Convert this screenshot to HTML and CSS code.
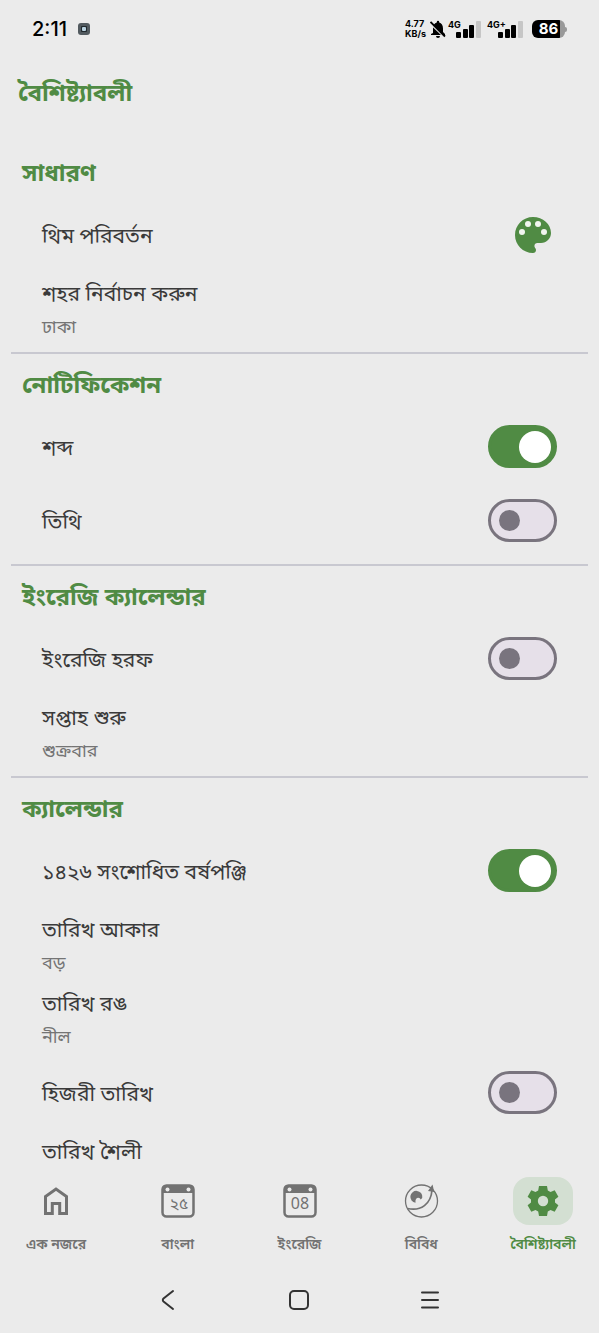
FILE: index.html
```html
<!DOCTYPE html>
<html lang="bn">
<head>
<meta charset="utf-8">
<meta name="viewport" content="width=device-width, initial-scale=1">
<title>বৈশিষ্ট্যাবলী</title>
<link rel="stylesheet" href="styles.css">
</head>
<body>
<div class="screen">
  <div class="status">
    <span class="clock">2:11</span>
    <svg class="chip" viewBox="0 0 14 14"><rect x="1" y="1" width="12" height="12" rx="3" fill="#525a5f"/><rect x="4" y="4" width="6" height="6" rx="1" fill="#20282d"/><rect x="5" y="5" width="4" height="4" rx="1" fill="#b9d2e0"/></svg>
    <span class="speed"><span>4.77</span><span>KB/s</span></span>
    <svg class="mute" viewBox="0 0 16 18"><path d="M3 13V8.500C3 5.500 4.500 3 6.800 2.500V2a1.200 1.200 0 0 1 2.400 0v.5C11.500 3 13 5.500 13 8.500V12l2 2v1h-14v-1zM6 16h4a2 2 0 0 1-4 0z"/><path d="M.5 3.500l14.500 14" stroke="#ebebeb" stroke-width="2"/><path d="M.5 2l14.500 14.500" stroke="#000" stroke-width="1.800"/></svg>
    <span class="signal"><span class="net">4G</span><svg class="bars" viewBox="0 0 26 17"><rect x="1" y="11" width="5" height="6" rx="1"/><rect x="8" y="8" width="5" height="9" rx="1"/><rect x="14" y="4" width="5" height="13" rx="1"/><rect class="off" x="21" y="0" width="5" height="17" rx="1"/></svg></span>
    <span class="signal second"><span class="net">4G+</span><svg class="bars" viewBox="0 0 26 17"><rect x="1" y="11" width="5" height="6" rx="1"/><rect x="8" y="8" width="5" height="9" rx="1"/><rect x="14" y="4" width="5" height="13" rx="1"/><rect class="off" x="21" y="0" width="5" height="17" rx="1"/></svg></span>
    <span class="battery">86</span><span class="tip"></span>
  </div>

  <header class="bar"><h1>বৈশিষ্ট্যাবলী</h1></header>

  <main class="settings">
    <section class="group">
      <h2>সাধারণ</h2>
      <button class="row" type="button"><span class="label">থিম পরিবর্তন</span>
        <svg class="palette" viewBox="0 0 36 36"><path d="M18 0C8 0 0 8 0 18s8 18 18 18c1.700 0 3-1.300 3-3 0-.8-.3-1.500-.8-2-.5-.6-.8-1.200-.8-2 0-1.700 1.300-3 3-3H26c5.500 0 10-4.500 10-10C36 7.200 28 0 18 0z" fill="#508b44"/><g fill="#f1f5ef"><circle cx="7" cy="15" r="3"/><circle cx="13" cy="7" r="3"/><circle cx="23" cy="7" r="3"/><circle cx="29" cy="15" r="3"/></g></svg>
      </button>
      <button class="row stacked" type="button"><span class="label">শহর নির্বাচন করুন</span><span class="value">ঢাকা</span></button>
    </section>
    <section class="group">
      <h2>নোটিফিকেশন</h2>
      <label class="row"><span class="label">শব্দ</span><input class="switch" type="checkbox" role="switch" checked></label>
      <label class="row"><span class="label">তিথি</span><input class="switch" type="checkbox" role="switch"></label>
    </section>
    <section class="group">
      <h2>ইংরেজি ক্যালেন্ডার</h2>
      <label class="row"><span class="label">ইংরেজি হরফ</span><input class="switch" type="checkbox" role="switch"></label>
      <button class="row stacked" type="button"><span class="label">সপ্তাহ শুরু</span><span class="value">শুক্রবার</span></button>
    </section>
    <section class="group">
      <h2>ক্যালেন্ডার</h2>
      <label class="row"><span class="label">১৪২৬ সংশোধিত বর্ষপঞ্জি</span><input class="switch" type="checkbox" role="switch" checked></label>
      <button class="row stacked" type="button"><span class="label">তারিখ আকার</span><span class="value">বড়</span></button>
      <button class="row stacked" type="button"><span class="label">তারিখ রঙ</span><span class="value">নীল</span></button>
      <label class="row"><span class="label">হিজরী তারিখ</span><input class="switch" type="checkbox" role="switch"></label>
      <button class="row stacked" type="button"><span class="label">তারিখ শৈলী</span></button>
    </section>
  </main>

  <nav class="tabs">
    <a class="tab" href="#home"><span class="pill"><svg viewBox="0 0 36 36"><path d="M7.500 30.500V13.500L18 6l10.500 7.500v17h-6.800V20.500h-7.400v10z" fill="none" stroke="#727272" stroke-width="3"/></svg></span><span>এক নজরে</span></a>
    <a class="tab" href="#bangla"><span class="pill"><svg viewBox="0 0 36 36"><rect x="2.500" y="2.500" width="31" height="31" rx="4" fill="none" stroke="#727272" stroke-width="2.500"/><path d="M2 10V6a4 4 0 0 1 4-4h24a4 4 0 0 1 4 4v4z" fill="#727272"/><circle cx="7.500" cy="6.500" r="2" fill="#ebebeb"/><circle cx="28.500" cy="6.500" r="2" fill="#ebebeb"/><text class="day" x="19" y="26">২৫</text></svg></span><span>বাংলা</span></a>
    <a class="tab" href="#english"><span class="pill"><svg viewBox="0 0 36 36"><rect x="2.500" y="2.500" width="31" height="31" rx="4" fill="none" stroke="#727272" stroke-width="2.500"/><path d="M2 10V6a4 4 0 0 1 4-4h24a4 4 0 0 1 4 4v4z" fill="#727272"/><circle cx="7.500" cy="6.500" r="2" fill="#ebebeb"/><circle cx="28.500" cy="6.500" r="2" fill="#ebebeb"/><text class="day" x="18" y="26">08</text></svg></span><span>ইংরেজি</span></a>
    <a class="tab" href="#misc"><span class="pill"><svg viewBox="0 0 36 36"><circle cx="18.500" cy="18" r="16" fill="none" stroke="#727272" stroke-width="1.300"/><path d="M4.500 25.500C18 28.500 28 21 29 7" fill="none" stroke="#727272" stroke-width="1.700"/><path d="M25 8L29.500 1.500l1.800 7.500z" fill="#727272"/><path d="M19.300 14.500a6 6 0 1 0-6.800 5.300c-.4-3.200 1-5 2.800-5 1.200 0 2 .8 2.200 1.800.8-.5 1.500-1.200 1.800-2.100z" fill="#727272"/></svg></span><span>বিবিধ</span></a>
    <a class="tab active" href="#features" aria-current="page"><span class="pill"><svg viewBox="0 0 36 36"><path d="M14 3h8l.8 4.400 2.700 1.500 4.200-1.600 3.700 6.400-3.400 2.800v3l3.400 2.800-3.700 6.400-4.200-1.600-2.700 1.500L22 33h-8l-.8-4.400-2.700-1.500-4.200 1.600-3.700-6.400L6 19.500v-3l-3.400-2.800 3.700-6.400 4.200 1.600 2.700-1.500z" fill="#508b44"/><circle cx="18" cy="18" r="5.200" fill="#d3dfd2"/></svg></span><span>বৈশিষ্ট্যাবলী</span></a>
  </nav>

  <div class="system">
    <button type="button" aria-label="Back"><svg viewBox="0 0 24 24"><path d="M17 3L7.500 10.500a2 2 0 0 0 0 3L17 21"/></svg></button>
    <button type="button" aria-label="Home"><svg viewBox="0 0 24 24"><rect x="3" y="3" width="18" height="18" rx="4"/></svg></button>
    <button type="button" aria-label="Recents"><svg viewBox="0 0 24 24"><path d="M4 4.500h16M4 12h16M4 19.500h16"/></svg></button>
  </div>
</div>
</body>
</html>
```

FILE: styles.css
```css
* { box-sizing: border-box; }

body {
  margin: 0;
  background: #ebebeb;
  color: #3a3a3a;
  font-family: "Noto Sans", "Noto Sans Bengali", sans-serif;
}

button, input { margin: 0; font: inherit; color: inherit; }
button { border: 0; background: none; text-align: left; }

.screen {
  display: flex;
  flex-direction: column;
  height: 100vh;
}

.status {
  flex: none;
  display: flex;
  align-items: center;
  height: 58px;
  padding: 0 32px;
  color: #000;
  font-family: Inter, "Noto Sans", sans-serif;
}
.clock { font-size: 20px; line-height: 28px; font-weight: 500; }
.chip { width: 14px; height: 14px; margin-left: 10px; }
.speed {
  display: flex;
  flex-direction: column;
  margin-left: auto;
  font-size: 9px;
  line-height: 10px;
  font-weight: 700;
}
.mute { width: 16px; height: 18px; margin: 0 2px 0 4px; }
.signal { position: relative; display: flex; justify-content: flex-end; width: 33px; }
.signal.second { width: 36px; margin-left: 6px; }
.net { position: absolute; left: 0; top: -1px; font-size: 9px; line-height: 10px; font-weight: 700; }
.bars { width: 26px; height: 17px; }
.off { fill: #c6c6c6; }
.battery {
  width: 33px;
  margin-left: 9px;
  border-radius: 6px;
  background: linear-gradient(90deg, #000 86%, #999 86%);
  color: #fff;
  font-size: 15px;
  line-height: 18px;
  font-weight: 700;
  text-align: center;
}
.tip { width: 2px; height: 5px; border-radius: 0 2px 2px 0; background: #999; }

.bar { flex: none; height: 84px; padding: 14px 18px; }
h1, h2 { margin: 0; color: #508b44; font-size: 24px; font-weight: 700; }
h1 { line-height: 40px; }

.settings { flex: 1; min-height: 0; overflow: hidden; padding: 0 11px; }
.group { padding-bottom: 6px; border-bottom: 2px solid #c8c8d0; }
h2 { padding: 12px 11px 8px; line-height: 36px; }

.row {
  display: flex;
  align-items: center;
  justify-content: space-between;
  width: 100%;
  height: 74px;
  padding: 0 31px 1px;
}
.row.stacked { flex-direction: column; align-items: flex-start; justify-content: flex-start; gap: 4px; padding-top: 8px; }
.label { font-size: 21px; line-height: 26px; }
.value { color: #747474; font-size: 18px; line-height: 32px; }
.palette { width: 36px; height: 36px; margin-right: 6px; }

.switch {
  appearance: none;
  display: flex;
  align-items: center;
  width: 69px;
  height: 43px;
  padding: 0 8px;
  border: 3px solid #79747e;
  border-radius: 22px;
  background: #e6e0e9;
}
.switch::before { content: ""; width: 21px; height: 21px; border-radius: 50%; background: #79747e; }
.switch:checked { justify-content: flex-end; padding: 0 3px; border-color: #508b44; background: #508b44; }
.switch:checked::before { width: 32px; height: 32px; background: #fff; }

.tabs {
  flex: none;
  display: flex;
  justify-content: space-between;
  height: 98px;
  padding-top: 9px;
}
.tab {
  display: flex;
  flex-direction: column;
  align-items: center;
  gap: 7px;
  width: 112px;
  color: #727272;
  font-size: 14px;
  line-height: 24px;
  font-weight: 600;
  text-decoration: none;
  white-space: nowrap;
}
.pill { display: flex; align-items: center; justify-content: center; width: 60px; height: 48px; border-radius: 16px; }
.pill svg { width: 36px; height: 36px; }
.day { fill: #727272; font-size: 16px; font-weight: 400; text-anchor: middle; }
.active { color: #508b44; }
.active .pill { background: #d3dfd2; }

.system { flex: none; display: flex; justify-content: center; gap: 107px; height: 67px; padding: 22px 2px 0 0; }
.system button { width: 24px; height: 24px; padding: 0; }
.system svg { display: block; width: 24px; height: 24px; fill: none; stroke: #333; stroke-width: 2; stroke-linecap: round; }
```
